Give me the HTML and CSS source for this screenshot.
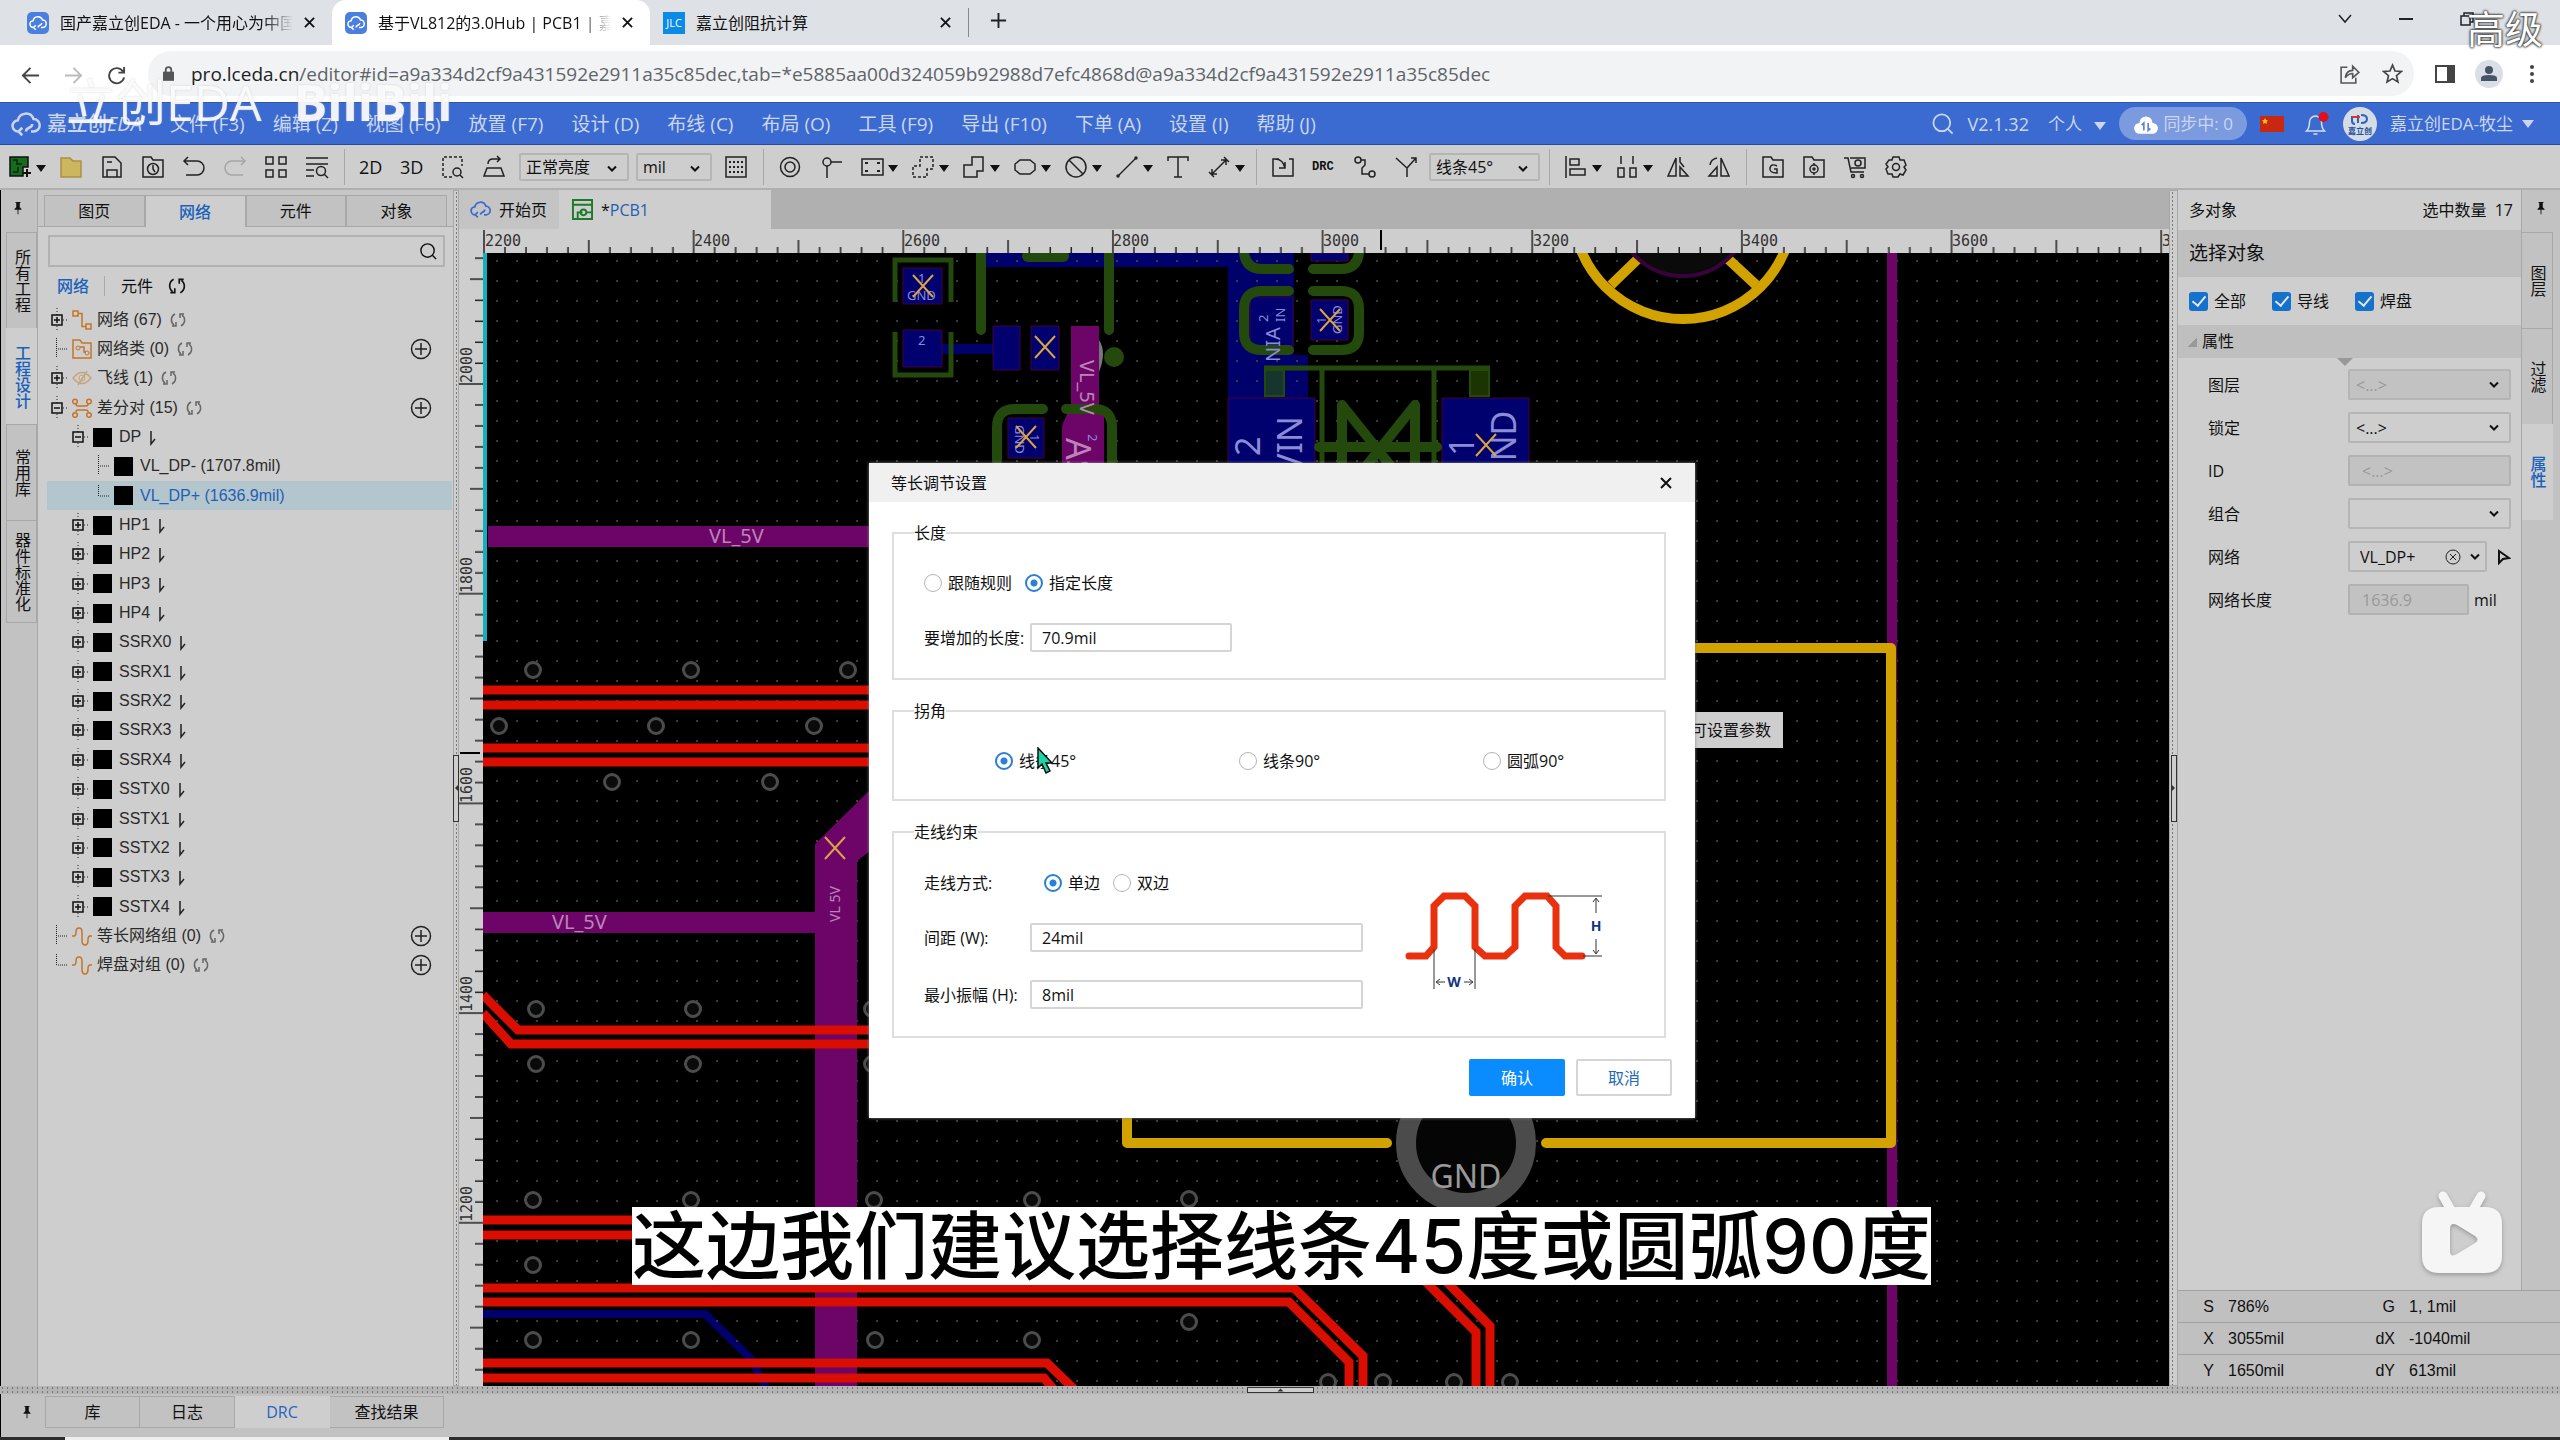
FILE: index.html
```html
<!DOCTYPE html>
<html lang="zh-CN">
<head>
  <meta charset="UTF-8">
  <title>基于VL812的3.0Hub | PCB1</title>
  <link rel="stylesheet" href="styles.css">
</head>
<body>
  <!-- Shared icons -->
  <svg class="sprite" xmlns="http://www.w3.org/2000/svg">
    <symbol id="cloud" viewBox="0 0 24 24"><path d="M7 18H6a4.500 4.500 0 0 1-.5-9A6.500 6.500 0 0 1 18 8a5 5 0 0 1 0 10h-2M9 21l-3-3 3-3M12 18c0-4 5-2 5-6" fill="none" stroke="currentColor" stroke-width="2"/></symbol>
    <symbol id="close" viewBox="0 0 12 12"><path d="M1 1l10 10M11 1L1 11" stroke="currentColor" stroke-width="2" fill="none"/></symbol>
    <symbol id="chev" viewBox="0 0 10 6"><path d="M1 1l4 4 4-4" stroke="currentColor" stroke-width="2" fill="none"/></symbol>
    <symbol id="pin" viewBox="0 0 10 16"><path d="M2 1h6v1H7v5l2 2v1H1V9l2-2V2H2zM4.500 10h1v5h-1z" fill="#111"/></symbol>
    <symbol id="search" viewBox="0 0 20 20"><circle cx="9" cy="9" r="7" fill="none" stroke="currentColor" stroke-width="1.500"/><path d="M14 14l4 4" stroke="currentColor" stroke-width="1.500"/></symbol>
    <symbol id="refresh" viewBox="0 0 18 18"><path d="M6 3a6.500 6.500 0 0 0-1 11M3 15h4v-4M12 15a6.500 6.500 0 0 0 1-11M15 3h-4v4" fill="none" stroke="currentColor" stroke-width="1.500"/></symbol>
    <symbol id="add" viewBox="0 0 22 22"><circle cx="11" cy="11" r="9.500" fill="none" stroke="#222" stroke-width="1.500"/><path d="M11 5v12M5 11h12" stroke="#222" stroke-width="1.500"/></symbol>
    <symbol id="plus" viewBox="0 0 20 28"><path d="M9 2v24M15 14h5" stroke="#222" stroke-dasharray="1 2"/><rect x="4" y="9" width="10" height="10" fill="#cecece" stroke="#111" stroke-width="1.500"/><path d="M6 14h6M9 11v6" stroke="#111" stroke-width="1.500"/></symbol>
    <symbol id="minus" viewBox="0 0 20 28"><path d="M9 2v24M15 14h5" stroke="#222" stroke-dasharray="1 2"/><rect x="4" y="9" width="10" height="10" fill="#cecece" stroke="#111" stroke-width="1.500"/><path d="M6 14h6" stroke="#111" stroke-width="1.500"/></symbol>
    <symbol id="mid" viewBox="0 0 20 28"><path d="M8.500 3v20M10 14h10" stroke="#222" stroke-dasharray="1 1"/></symbol>
    <symbol id="end" viewBox="0 0 20 28"><path d="M8.500 3v11M10 14h10" stroke="#222" stroke-dasharray="1 1"/></symbol>
    <symbol id="net" viewBox="0 0 20 20"><path d="M1 1h5v5H1zM14 14h5v5h-5zM6 3.500h4v13h4" fill="none" stroke="#c57428" stroke-width="1.500"/></symbol>
    <symbol id="netclass" viewBox="0 0 20 20"><path d="M1 1h7l2 3h9v15H1zM8 8h4v5h2" fill="none" stroke="#c57428" stroke-width="1.500"/><circle cx="6" cy="9" r="2" fill="none" stroke="#c57428"/><circle cx="15" cy="14" r="2" fill="none" stroke="#c57428"/></symbol>
    <symbol id="eye" viewBox="0 0 20 20"><path d="M1 10q9-11 18 0q-9 11-18 0zM15 3L6 17" fill="none" stroke="#c9a27a" stroke-width="1.500"/><circle cx="10" cy="10" r="3" fill="none" stroke="#c9a27a"/></symbol>
    <symbol id="diff" viewBox="0 0 20 20"><g fill="none" stroke="#c57428" stroke-width="1.500"><circle cx="3" cy="3.500" r="2.300"/><circle cx="17" cy="3.500" r="2.300"/><circle cx="3" cy="17" r="2.300"/><circle cx="17" cy="17" r="2.300"/><path d="M4 6q0 2 2 2h8q2 0 2-2M4 14q0-2 2-2h8q2 0 2 2"/></g></symbol>
    <symbol id="wave" viewBox="0 0 20 20"><path d="M0 10h2q2 0 2-4t3-4 3 4v8q0 5 3 5t3-5q0-4 2-4h2" fill="none" stroke="#c57428" stroke-width="1.500"/></symbol>
    <symbol id="down" viewBox="0 0 8 16"><path d="M2 1v13l4-5" fill="none" stroke="#222" stroke-width="1.500"/></symbol>
  </svg>

  <!-- Browser chrome -->
  <header class="tabstrip">
    <div class="tab"><span class="fav"><svg><use href="#cloud"/></svg></span><span class="tab-title">国产嘉立创EDA - 一个用心为中国</span><button class="x" aria-label="关闭"><svg><use href="#close"/></svg></button></div>
    <div class="tab current"><span class="fav"><svg><use href="#cloud"/></svg></span><span class="tab-title">基于VL812的3.0Hub | PCB1 | 嘉立</span><button class="x" aria-label="关闭"><svg><use href="#close"/></svg></button></div>
    <div class="tab"><span class="fav jlc">JLC</span><span class="tab-title">嘉立创阻抗计算</span><button class="x" aria-label="关闭"><svg><use href="#close"/></svg></button></div>
    <button class="newtab" aria-label="新标签页"><svg viewBox="0 0 18 18"><path d="M9 1v16M1 9h16" stroke="#222" stroke-width="2"/></svg></button>
    <div class="winctl">
      <svg viewBox="0 0 14 10"><path d="M1 1l6 7 6-7" fill="none" stroke="#222" stroke-width="1.500"/></svg>
      <svg viewBox="0 0 14 10"><path d="M0 5h14" stroke="#222" stroke-width="2"/></svg>
      <svg viewBox="0 0 14 14"><path d="M1 4h9v9H1zM4 4V1h9v9h-3" fill="none" stroke="#222" stroke-width="1.500"/></svg>
    </div>
  </header>
  <div class="address">
    <button class="nav" aria-label="后退"><svg viewBox="0 0 20 20"><path d="M19 10H2M10 2l-8 8 8 8" fill="none" stroke="#444" stroke-width="2"/></svg></button>
    <button class="nav" aria-label="前进"><svg viewBox="0 0 20 20"><path d="M1 10h17M10 2l8 8-8 8" fill="none" stroke="#bbb" stroke-width="2"/></svg></button>
    <button class="nav" aria-label="刷新"><svg viewBox="0 0 20 20"><path d="M17 6a8 8 0 1 0 1 6M18 1v6h-6" fill="none" stroke="#444" stroke-width="2"/></svg></button>
    <div class="url">
      <svg class="lock" viewBox="0 0 12 16"><path d="M0 6h12v10H0z" fill="#555"/><path d="M3 7V4a3 3 0 0 1 6 0v3" fill="none" stroke="#555" stroke-width="2"/></svg>
      <span><b>pro.lceda.cn</b>/editor#id=a9a334d2cf9a431592e2911a35c85dec,tab=*e5885aa00d324059b92988d7efc4868d@a9a334d2cf9a431592e2911a35c85dec</span>
      <svg class="share" viewBox="0 0 20 20"><path d="M8 4H2v15h14v-5M6 14q1-7 7-7V3l6 6-6 5v-4q-4 0-7 4z" fill="none" stroke="#555" stroke-width="1.500"/></svg>
      <svg class="star" viewBox="0 0 20 20"><path d="M10 2l2.400 5.600 6 .5-4.600 4 1.400 5.900L10 14.900 4.800 18l1.400-5.900-4.600-4 6-.5z" fill="none" stroke="#444" stroke-width="1.600"/></svg>
    </div>
    <svg class="side" viewBox="0 0 20 18"><path d="M1 1h18v16H1z" fill="none" stroke="#444" stroke-width="2"/><path d="M12 1h7v16h-7z" fill="#444"/></svg>
    <svg class="user" viewBox="0 0 30 30"><circle cx="15" cy="15" r="14" fill="#dadfe6"/><circle cx="15" cy="11" r="4" fill="#465468"/><path d="M7 22v-3q0-3 8-3t8 3v3z" fill="#465468"/></svg>
    <svg class="dots" viewBox="0 0 4 18"><circle cx="2" cy="2" r="2"/><circle cx="2" cy="9" r="2"/><circle cx="2" cy="16" r="2"/></svg>
  </div>

  <!-- Editor menu bar -->
  <nav class="menubar">
    <svg class="brand-icon"><use href="#cloud"/></svg>
    <strong class="brand">嘉立创<i>EDA</i></strong>
    <button>文件 (F3)</button><button>编辑 (Z)</button><button>视图 (F6)</button><button>放置 (F7)</button><button>设计 (D)</button><button>布线 (C)</button><button>布局 (O)</button><button>工具 (F9)</button><button>导出 (F10)</button><button>下单 (A)</button><button>设置 (I)</button><button>帮助 (J)</button>
    <div class="account">
      <svg class="msearch"><use href="#search"/></svg>
      <span class="ver">V2.1.32</span>
      <span class="who">个人 <i class="tri"></i></span>
      <span class="sync"><svg viewBox="0 0 24 20"><path d="M6 19a5 5 0 0 1 0-10 6 6 0 0 1 12 0 5 5 0 0 1 0 10z" fill="#fff"/><path d="M10 16V9l-2 2M14 9v7l2-2" stroke="#5c82d5" stroke-width="1.500" fill="none"/></svg>同步中: 0</span>
      <svg class="flag" viewBox="0 0 24 16"><path d="M0 0h24v16H0z" fill="#c8280f"/><path d="M5 2l1 2 2 .5L6.500 6 7 8 5 7 3 8l.5-2L2 4.500 4 4z" fill="#f0c020"/></svg>
      <svg class="bell" viewBox="0 0 26 24"><path d="M3 19q3-3 3-9a6 6 0 0 1 12 0q0 6 3 9zM10 22h4" fill="none" stroke="#d5def2" stroke-width="1.500"/><circle cx="20" cy="5" r="5" fill="#e0101c"/></svg>
      <svg class="avatar" viewBox="0 0 34 34"><circle cx="17" cy="17" r="17" fill="#d5dce4"/><path d="M9 9v5q0 3 3 3M15 8v8M18 8q6 0 6 4t-6 4" fill="none" stroke="#2a62c0" stroke-width="2"/><path d="M9 10h8" stroke="#d33" stroke-width="2"/><text x="17" y="27" text-anchor="middle" font-size="8" font-weight="700" fill="#234f9c">嘉立创</text></svg>
      <span>嘉立创EDA-牧尘</span>
      <i class="tri"></i>
    </div>
  </nav>

  <!-- Toolbar -->
  <div class="toolbar">
    <button class="tool drop"><svg viewBox="0 0 24 24"><path d="M2 2h18v10h-5v9H2z" fill="#176b1e" stroke="#111"/><path d="M5 5h4v4h5M5 17h5v-5" stroke="#0a2a0a" fill="none" stroke-width="1.500"/><path d="M19 14v8M15 18h8" stroke="#111" stroke-width="2"/></svg></button>
    <button class="tool"><svg viewBox="0 0 24 24"><path d="M2 3h9l3 3h8v16H2z" fill="#cdb65e" stroke="#a99244"/></svg></button>
    <button class="tool"><svg viewBox="0 0 24 24"><path d="M3 2h12l6 6v14H3zM7 22v-7h10v7M7 7h5"/></svg></button>
    <button class="tool"><svg viewBox="0 0 24 24"><path d="M2 2h8l2 3h10v17H2z"/><circle cx="12" cy="14" r="5.500"/><path d="M12 10v4l2 3"/></svg></button>
    <button class="tool"><svg viewBox="0 0 24 24"><path d="M6 2L2 6l4 4M2 6h13a6.500 6.500 0 0 1 0 14H4"/></svg></button>
    <button class="tool off"><svg viewBox="0 0 24 24"><path d="M18 2l4 4-4 4M22 6H9a6.500 6.500 0 0 0 0 14h11"/></svg></button>
    <button class="tool"><svg viewBox="0 0 24 24"><path d="M2 2h7v7H2zM15 2h7v7h-7zM2 15h7v7H2zM15 15h7v7h-7z"/></svg></button>
    <button class="tool"><svg viewBox="0 0 24 24"><path d="M1 3h22M1 9h22M1 15h8M1 21h8"/><circle cx="16" cy="16" r="4.500"/><path d="M19 19l4 4"/></svg></button>
    <span class="sep"></span>
    <button class="tool word">2D</button>
    <button class="tool word">3D</button>
    <button class="tool"><svg viewBox="0 0 24 24"><path d="M11 22H2V2h19v9" stroke-dasharray="3 2"/><circle cx="16" cy="17" r="4"/><path d="M19 20l3 3"/></svg></button>
    <button class="tool"><svg viewBox="0 0 24 24"><path d="M5 13h14l3 8H2zM6 9q0-5 5-5h7M15 1l3 3-3 3"/></svg></button>
    <label class="combo tbright"><select aria-label="亮度"><option>正常亮度</option></select><svg><use href="#chev"/></svg></label>
    <label class="combo tunit"><select aria-label="单位"><option>mil</option></select><svg><use href="#chev"/></svg></label>
    <button class="tool"><svg viewBox="0 0 24 24"><path d="M2 2h20v20H2z"/><path d="M5 7h14M5 12h14M5 17h14" stroke-dasharray="2 2" stroke-width="2"/></svg></button>
    <span class="sep"></span>
    <button class="tool"><svg viewBox="0 0 24 24"><circle cx="12" cy="12" r="9.500"/><circle cx="12" cy="12" r="5"/></svg></button>
    <button class="tool"><svg viewBox="0 0 24 24"><circle cx="8" cy="7" r="4"/><path d="M12 7h11M8 11v12"/></svg></button>
    <button class="tool drop"><svg viewBox="0 0 24 24"><path d="M2 4h21v16H2z"/><path d="M5 7h3v2H5zM17 7h3v2h-3zM5 15h3v2H5zM17 15h3v2h-3z" fill="#222" stroke="none"/></svg></button>
    <button class="tool drop"><svg viewBox="0 0 24 24"><path d="M9 2h13v12h-6v8H2V11h7z" stroke-dasharray="3 2"/></svg></button>
    <button class="tool drop"><svg viewBox="0 0 24 24"><path d="M10 2h11v14h-6v6H2V10h8z"/></svg></button>
    <button class="tool drop"><svg viewBox="0 0 24 24"><path d="M7 5h10l5 4v6l-5 4H7l-5-4V9z"/></svg></button>
    <button class="tool drop"><svg viewBox="0 0 24 24"><circle cx="12" cy="12" r="10"/><path d="M5 5l14 14"/></svg></button>
    <button class="tool drop"><svg viewBox="0 0 24 24"><path d="M3 21L21 3"/><circle cx="3" cy="21" r="1"/><circle cx="21" cy="3" r="1"/></svg></button>
    <button class="tool"><svg viewBox="0 0 24 24"><path d="M2 6V2h20v4M12 2v20M8 22h8"/></svg></button>
    <button class="tool drop"><svg viewBox="0 0 24 24"><path d="M5 19L19 5M19 10V5h-5M5 14v5h5M17 2l5 5M2 17l5 5"/></svg></button>
    <span class="sep"></span>
    <button class="tool"><svg viewBox="0 0 24 24"><path d="M8 4H2v17h20V4h-4M4 4q8 0 10 9M14 7v6H8"/></svg></button>
    <button class="tool word small">DRC</button>
    <button class="tool"><svg viewBox="0 0 24 24"><circle cx="5" cy="5" r="3"/><circle cx="19" cy="19" r="3"/><path d="M8 5h4v5l-3 3v6h7"/></svg></button>
    <button class="tool"><svg viewBox="0 0 24 24"><path d="M2 3l11 10v9M13 13L22 3M17 3h5v5"/></svg></button>
    <label class="combo tcorner"><select aria-label="拐角"><option>线条45°</option></select><svg><use href="#chev"/></svg></label>
    <span class="sep wide"></span>
    <button class="tool drop"><svg viewBox="0 0 24 24"><path d="M2 1v22M6 4h9v6H6zM6 14h15v6H6z"/></svg></button>
    <button class="tool drop"><svg viewBox="0 0 24 24"><path d="M3 13h6v9H3zM15 13h6v9h-6zM6 9V1M18 9V1"/></svg></button>
    <button class="tool"><svg viewBox="0 0 24 24"><path d="M10 3v18H2zM14 12v9h8zM14 2v5l4 5"/></svg></button>
    <button class="tool"><svg viewBox="0 0 24 24"><path d="M10 12v9H2zM14 3v18h8zM3 10q1-6 7-7"/></svg></button>
    <span class="sep"></span>
    <button class="tool"><svg viewBox="0 0 24 24"><path d="M2 2h8l2 3h10v17H2z"/><path d="M16 11q-6-3-7 2t7 5v-4h-3"/></svg></button>
    <button class="tool"><svg viewBox="0 0 24 24"><path d="M2 2h8l2 3h10v17H2z"/><circle cx="12" cy="14" r="4"/><circle cx="12" cy="14" r="1"/><path d="M12 8v2M12 18v2"/></svg></button>
    <button class="tool"><svg viewBox="0 0 24 24"><path d="M1 3h4l3 14h13M7 3h15v10H8"/><circle cx="15" cy="8" r="3"/><circle cx="10" cy="21" r="1.500"/><circle cx="19" cy="21" r="1.500"/></svg></button>
    <button class="tool"><svg viewBox="0 0 24 24"><path d="M9 2h6l1 3 4 0 2 5-2 2 2 3-3 5-3-1-2 3H9l-1-3-4 0-2-5 2-2-2-3 3-4 3 0z"/><circle cx="12" cy="12" r="3.500"/></svg></button>
  </div>

  <main class="main">
    <div class="strip left">
      <svg class="pin"><use href="#pin"/></svg>
      <button class="vtab">所有工程</button>
      <button class="vtab on">工程设计</button>
      <button class="vtab">常用库</button>
      <button class="vtab long">器件标准化</button>
    </div>

    <aside class="panel">
      <div class="ptabs"><button>图页</button><button class="on">网络</button><button>元件</button><button>对象</button></div>
      <label class="find"><input type="search" aria-label="搜索网络"><svg><use href="#search"/></svg></label>
      <div class="sub"><b>网络</b><span>元件</span><svg><use href="#refresh"/></svg></div>
      <ul class="tree">
        <li><svg class="ex"><use href="#plus"/></svg><svg class="ic"><use href="#net"/></svg>网络 (67)<svg class="re"><use href="#refresh"/></svg></li>
        <li><svg class="ex"><use href="#mid"/></svg><svg class="ic"><use href="#netclass"/></svg>网络类 (0)<svg class="re"><use href="#refresh"/></svg><button aria-label="新增"><svg><use href="#add"/></svg></button></li>
        <li><svg class="ex"><use href="#plus"/></svg><svg class="ic"><use href="#eye"/></svg>飞线 (1)<svg class="re"><use href="#refresh"/></svg></li>
        <li><svg class="ex"><use href="#minus"/></svg><svg class="ic"><use href="#diff"/></svg>差分对 (15)<svg class="re"><use href="#refresh"/></svg><button aria-label="新增"><svg><use href="#add"/></svg></button></li>
        <li class="l1"><svg class="ex"><use href="#minus"/></svg><i class="sq"></i>DP<svg class="dn"><use href="#down"/></svg></li>
        <li class="l2"><svg class="ex"><use href="#mid"/></svg><i class="sq"></i>VL_DP- (1707.8mil)</li>
        <li class="l2 sel"><svg class="ex"><use href="#end"/></svg><i class="sq"></i>VL_DP+ (1636.9mil)</li>
        <li class="l1"><svg class="ex"><use href="#plus"/></svg><i class="sq"></i>HP1<svg class="dn"><use href="#down"/></svg></li>
        <li class="l1"><svg class="ex"><use href="#plus"/></svg><i class="sq"></i>HP2<svg class="dn"><use href="#down"/></svg></li>
        <li class="l1"><svg class="ex"><use href="#plus"/></svg><i class="sq"></i>HP3<svg class="dn"><use href="#down"/></svg></li>
        <li class="l1"><svg class="ex"><use href="#plus"/></svg><i class="sq"></i>HP4<svg class="dn"><use href="#down"/></svg></li>
        <li class="l1"><svg class="ex"><use href="#plus"/></svg><i class="sq"></i>SSRX0<svg class="dn"><use href="#down"/></svg></li>
        <li class="l1"><svg class="ex"><use href="#plus"/></svg><i class="sq"></i>SSRX1<svg class="dn"><use href="#down"/></svg></li>
        <li class="l1"><svg class="ex"><use href="#plus"/></svg><i class="sq"></i>SSRX2<svg class="dn"><use href="#down"/></svg></li>
        <li class="l1"><svg class="ex"><use href="#plus"/></svg><i class="sq"></i>SSRX3<svg class="dn"><use href="#down"/></svg></li>
        <li class="l1"><svg class="ex"><use href="#plus"/></svg><i class="sq"></i>SSRX4<svg class="dn"><use href="#down"/></svg></li>
        <li class="l1"><svg class="ex"><use href="#plus"/></svg><i class="sq"></i>SSTX0<svg class="dn"><use href="#down"/></svg></li>
        <li class="l1"><svg class="ex"><use href="#plus"/></svg><i class="sq"></i>SSTX1<svg class="dn"><use href="#down"/></svg></li>
        <li class="l1"><svg class="ex"><use href="#plus"/></svg><i class="sq"></i>SSTX2<svg class="dn"><use href="#down"/></svg></li>
        <li class="l1"><svg class="ex"><use href="#plus"/></svg><i class="sq"></i>SSTX3<svg class="dn"><use href="#down"/></svg></li>
        <li class="l1"><svg class="ex"><use href="#plus"/></svg><i class="sq"></i>SSTX4<svg class="dn"><use href="#down"/></svg></li>
        <li><svg class="ex"><use href="#mid"/></svg><svg class="ic"><use href="#wave"/></svg>等长网络组 (0)<svg class="re"><use href="#refresh"/></svg><button aria-label="新增"><svg><use href="#add"/></svg></button></li>
        <li><svg class="ex"><use href="#end"/></svg><svg class="ic"><use href="#wave"/></svg>焊盘对组 (0)<svg class="re"><use href="#refresh"/></svg><button aria-label="新增"><svg><use href="#add"/></svg></button></li>
      </ul>
    </aside>
    <div class="split v"><span></span></div>

    <section class="center">
      <div class="doctabs">
        <button><svg class="home"><use href="#cloud"/></svg>开始页</button>
        <button class="on"><svg viewBox="0 0 22 22"><path d="M1 1h20v20H1zM1 6h20M6 21v-7h5M15 14h6" fill="none" stroke="#1d7a2c" stroke-width="2"/><circle cx="12" cy="14" r="3" fill="none" stroke="#1d7a2c" stroke-width="2"/></svg><span>*</span>PCB1</button>
      </div>
      <!-- Board view: rulers on the top and left, board in screen units -->
      <svg class="board" xmlns="http://www.w3.org/2000/svg" viewBox="459 229 1710 1157" preserveAspectRatio="xMinYMin slice">
        <defs>
          <pattern id="dotgrid" x="496" y="260" width="20" height="20" patternUnits="userSpaceOnUse"><rect width="2" height="2" fill="#3c3c3c"/></pattern>
          <pattern id="rx" x="483" y="229" width="209.650" height="24" patternUnits="userSpaceOnUse">
            <path d="M1 1v23M105.800 11v13M22 18v6M43 18v6M64 18v6M85 18v6M127 18v6M148 18v6M169 18v6M190 18v6" stroke="#222" stroke-width="1.500"/>
          </pattern>
          <pattern id="ry" x="459" y="383" width="24" height="209.700" patternUnits="userSpaceOnUse">
            <path d="M0 1h24M11 105.800h13M16 22h8M16 43h8M16 64h8M16 85h8M16 127h8M16 148h8M16 169h8M16 190h8" stroke="#222" stroke-width="1.500"/>
          </pattern>
          <g id="xm"><path d="M-10-11L10 11M10-11L-10 11" stroke="#d9a441" stroke-width="2"/></g>
          <ellipse id="via" rx="7.500" ry="7.500" fill="#0a0a0a" stroke="#4c4c4c" stroke-width="3"/>
        </defs>
        <rect x="459" y="229" width="1710" height="1157" fill="#cecece"/>
        <rect x="483" y="229" width="1686" height="24" fill="url(#rx)"/>
        <rect x="459" y="253" width="24" height="1133" fill="url(#ry)"/>
        <path d="M1381 230v20M460 753h20" stroke="#000" stroke-width="2"/>
        <g class="rtext">
          <text x="485" y="246">2200</text><text x="694" y="246">2400</text><text x="904" y="246">2600</text><text x="1113" y="246">2800</text><text x="1323" y="246">3000</text><text x="1533" y="246">3200</text><text x="1742" y="246">3400</text><text x="1952" y="246">3600</text><text x="2162" y="246">3800</text>
          <text transform="translate(472 383) rotate(-90)">2000</text><text transform="translate(472 593) rotate(-90)">1800</text><text transform="translate(472 803) rotate(-90)">1600</text><text transform="translate(472 1012) rotate(-90)">1400</text><text transform="translate(472 1222) rotate(-90)">1200</text>
        </g>

        <svg x="483" y="253" width="1686" height="1133" viewBox="483 253 1686 1133">
          <rect x="483" y="253" width="1686" height="1133" fill="#000"/>
          <!-- Blue pour and traces -->
          <path d="M986 253h308v102h14v45h-80V267H986z" fill="#00006c"/>
          <path d="M942 349h52" stroke="#00006c" stroke-width="10"/>
          <path d="M483 1314h222l47 46 14 28" fill="none" stroke="#00006c" stroke-width="8"/>
          <rect x="483" y="253" width="1686" height="1133" fill="url(#dotgrid)"/>
          <!-- Bottom layer power -->
          <g fill="#6d0569">
            <path d="M488 526h390v21H488zM483 912h340v21H483zM815 1400V844l60-59v62l-18 14v539zM1887 253h10v1133h-10z"/>
            <path d="M1071 326h28v78l5 12v50h-42v-40l9-22z"/>
          </g>
          <path d="M1099 340q8 12 0 32z" fill="#777"/>
          <path d="M485 253v388" stroke="#15aebe" stroke-width="4"/>
          <!-- Pads -->
          <g fill="#00006e" stroke="#43003f">
            <path d="M903 268h39v36h-39zM903 330h39v37h-39zM993 326h27v44h-27zM1031 326h28v44h-28zM1008 418h36v40h-36zM1250 297h43v49h-43zM1311 300h37v40h-37zM1311 253h37v8h-37zM1228 398h87v70h-87zM1442 398h87v70h-87z"/>
          </g>
          <!-- Silkscreen -->
          <g fill="none" stroke="#24490c">
            <path d="M895 302v-42h56v42M895 332v43h56v-43" stroke-width="5"/>
            <path d="M981 253v77M1109 253v77" stroke-width="10" stroke-linecap="round"/>
            <path d="M1028 256h35" stroke-width="12" stroke-linecap="round"/>
            <path d="M1043 409h-28q-18 0-18 18v34M1066 409h28q18 0 18 18v34" stroke-width="10" stroke-linecap="round"/>
            <path d="M1244 253q2 16 18 16h27M1359 253q-2 16-18 16h-28M1289 291h-27q-18 0-18 18v24q0 17 18 17h27M1313 291h28q18 0 18 18v24q0 17-18 17h-28" stroke-width="10" stroke-linecap="round"/>
            <path d="M1264 368h226M1322 368v98M1434 368v98" stroke-width="5"/>
            <path d="M1342 405v60M1415 405v60M1342 405l56 70M1415 405l-56 70M1319 447h118" stroke-width="10" stroke-linecap="round"/>
            <path d="M1265 370h19v26h-19z" fill="#16352c" stroke-width="2"/><path d="M1470 370h19v26h-19z" fill="#1b3402" stroke-width="2"/>
          </g>
          <circle cx="1114" cy="357" r="10" fill="#24490c"/>
          <!-- Pad and net names -->
          <g class="net">
            <text x="709" y="543">VL_5V</text><text x="552" y="929">VL_5V</text>
            <text class="n13" transform="translate(840 922) rotate(-90)">VL 5V</text>
            <text transform="translate(1080 360) rotate(90)">VL_5V</text>
            <text class="n34" transform="translate(1066 438) rotate(90)">AS</text>
          </g>
          <g class="pad">
            <text x="918" y="283">1</text><text x="907" y="300">GND</text><text x="918" y="345">2</text>
            <text transform="translate(1015 425) rotate(90)">GND</text><text transform="translate(1030 434) rotate(90)">1</text><text transform="translate(1088 434) rotate(90)">2</text>
            <text transform="translate(1268 322) rotate(-90)">2</text><text transform="translate(1285 322) rotate(-90)">IN</text><text class="n20" transform="translate(1280 362) rotate(-90)">NIA</text>
            <text transform="translate(1326 324) rotate(-90)">1</text><text transform="translate(1342 334) rotate(-90)">GND</text>
            <text class="n34" transform="translate(1260 456) rotate(-90)">2</text><text class="n34" transform="translate(1302 474) rotate(-90)">VIN</text>
            <text class="n34" transform="translate(1474 456) rotate(-90)">1</text><text class="n34" transform="translate(1516 486) rotate(-90)">GND</text>
          </g>
          <use href="#xm" x="923" y="286"/><use href="#xm" x="1045" y="347"/><use href="#xm" x="1026" y="437"/><use href="#xm" x="1330" y="320"/><use href="#xm" x="1486" y="445"/><use href="#xm" x="835" y="848"/>
          <!-- Signal pairs -->
          <g fill="none" stroke="#d90d00" stroke-width="9">
            <path d="M483 690h400M483 705h400M483 748h400M483 762h400"/>
            <path d="M483 995l35 35h370M483 1013l28 31h377"/>
            <path d="M483 1220h903l104 106v74M483 1235h896l97 97v68"/>
            <path d="M483 1288h811l69 68v34M483 1302h806l60 60v30M483 1363h564l28 27M483 1378h561l12 14"/>
          </g>
          <!-- Outline -->
          <g fill="none" stroke="#d1a200" stroke-width="10" stroke-linecap="round" stroke-linejoin="round">
            <path d="M1690 648h201v495h-345M1127 1100v43h260"/>
            <circle cx="1683" cy="209" r="110"/>
            <path d="M1640 257l-29 28M1726 257l30 28" stroke-linecap="butt"/>
          </g>
          <circle cx="1683" cy="209" r="67" fill="#0a0a0a" stroke="#36043b" stroke-width="4"/>
          <circle cx="1466" cy="1143" r="60" fill="#050505" stroke="#4b4b4b" stroke-width="20"/>
          <text class="gnd" x="1466" y="1188">GND</text>
          <g>
            <use href="#via" x="533" y="670"/><use href="#via" x="691" y="670"/><use href="#via" x="848" y="670"/>
            <use href="#via" x="499" y="726"/><use href="#via" x="656" y="726"/><use href="#via" x="814" y="726"/>
            <use href="#via" x="612" y="782"/><use href="#via" x="770" y="782"/>
            <use href="#via" x="536" y="1009"/><use href="#via" x="693" y="1009"/><use href="#via" x="872" y="1009"/>
            <use href="#via" x="536" y="1064"/><use href="#via" x="693" y="1064"/><use href="#via" x="872" y="1064"/>
            <use href="#via" x="533" y="1200"/><use href="#via" x="691" y="1200"/><use href="#via" x="874" y="1200"/><use href="#via" x="1032" y="1200"/><use href="#via" x="1189" y="1199"/>
            <use href="#via" x="533" y="1265"/><use href="#via" x="1189" y="1322"/>
            <use href="#via" x="533" y="1340"/><use href="#via" x="691" y="1340"/><use href="#via" x="875" y="1340"/><use href="#via" x="1032" y="1340"/>
            <use href="#via" x="1328" y="1382"/><use href="#via" x="1383" y="1382"/><use href="#via" x="1454" y="1382"/><use href="#via" x="1510" y="1382"/>
          </g>
        </svg>
      </svg>
    </section>

    <div class="split v right"><span></span></div>
    <div class="rightcol">
      <div class="rtop">
        <aside class="props">
          <div class="phead"><span>多对象</span><span>选中数量&nbsp; 17</span></div>
          <h2>选择对象</h2>
          <div class="checks">
            <label><input type="checkbox" checked>全部</label><label><input type="checkbox" checked>导线</label><label><input type="checkbox" checked>焊盘</label>
          </div>
          <h3><i></i>属性</h3>
          <div class="notch"></div>
          <div class="form">
            <label for="layer">图层</label><span class="combo off"><select id="layer" disabled><option>&lt;...&gt;</option></select><svg><use href="#chev"/></svg></span>
            <label for="lock">锁定</label><span class="combo"><select id="lock"><option>&lt;...&gt;</option></select><svg><use href="#chev"/></svg></span>
            <label for="pid">ID</label><input id="pid" class="field" value="&lt;...&gt;" disabled>
            <label for="group">组合</label><span class="combo"><select id="group"><option></option></select><svg><use href="#chev"/></svg></span>
            <label for="netname">网络</label><span class="line"><span class="combo netbox"><select id="netname"><option>VL_DP+</option></select><svg class="clear" viewBox="0 0 16 16"><circle cx="8" cy="8" r="7"/><path d="M5 5l6 6M11 5l-6 6"/></svg><svg><use href="#chev"/></svg></span><svg class="pick" viewBox="0 0 14 16"><path d="M2 2l10 7-6 1-4 4z" fill="none" stroke="#111" stroke-width="2"/></svg></span>
            <label for="netlen">网络长度</label><span class="line"><input id="netlen" class="field len" value="1636.9" disabled><span class="unit">mil</span></span>
          </div>
        </aside>
        <div class="strip">
          <svg class="pin"><use href="#pin"/></svg>
          <button class="vtab">图层</button><button class="vtab">过滤</button><button class="vtab on">属性</button>
        </div>
      </div>
      <dl class="status">
        <dt>S</dt><dd>786%</dd><dt>G</dt><dd>1, 1mil</dd>
        <dt>X</dt><dd>3055mil</dd><dt>dX</dt><dd>-1040mil</dd>
        <dt>Y</dt><dd>1650mil</dd><dt>dY</dt><dd>613mil</dd>
      </dl>
    </div>
  </main>

  <div class="split h"><span></span></div>
  <footer class="bottom">
    <svg class="pin"><use href="#pin"/></svg>
    <button>库</button><button>日志</button><button class="on">DRC</button><button class="wide">查找结果</button>
  </footer>
  <div class="edge"><span></span></div>

  <div class="tip">可设置参数</div>

  <!-- Length tuning dialog -->
  <form class="dialog">
    <header><span>等长调节设置</span><button type="button" aria-label="关闭"><svg><use href="#close"/></svg></button></header>
    <div class="dbody">
      <fieldset>
        <legend>长度</legend>
        <div class="row"><label class="radio"><input type="radio" name="len">跟随规则</label><label class="radio"><input type="radio" name="len" checked>指定长度</label></div>
        <div class="row"><label class="cap" for="addlen">要增加的长度:</label><input class="short" id="addlen" value="70.9mil"></div>
      </fieldset>
      <fieldset>
        <legend>拐角</legend>
        <div class="thirds"><label class="radio"><input type="radio" name="corner" checked>线条45°</label><label class="radio"><input type="radio" name="corner">线条90°</label><label class="radio"><input type="radio" name="corner">圆弧90°</label></div>
      </fieldset>
      <fieldset class="rules">
        <legend>走线约束</legend>
        <div class="rows">
          <div class="row"><span class="cap mode">走线方式:</span><label class="radio"><input type="radio" name="side" checked>单边</label><label class="radio"><input type="radio" name="side">双边</label></div>
          <div class="row"><label class="cap" for="gapw">间距 (W):</label><input id="gapw" value="24mil"></div>
          <div class="row"><label class="cap" for="amph">最小振幅 (H):</label><input id="amph" value="8mil"></div>
        </div>
        <svg class="diagram" viewBox="1404 888 200 104">
          <path d="M1409 955h17l8-9v-41l10-10h21l10 10v41l10 9h20l10-9v-41l10-10h22l9 10v41l9 9h17" fill="none" stroke="#e8310f" stroke-width="7" stroke-linecap="round"/>
          <path d="M1548 895h54M1583 955h19M1434 948v40M1475 948v40M1596 898v14M1596 938v14M1437 981h8M1464 981h8" stroke="#333"/>
          <path d="M1593 901l3-4 3 4M1593 949l3 4 3-4M1440 978l-4 3 4 3M1469 978l4 3-4 3" fill="none" stroke="#333"/>
          <text x="1596" y="930">H</text><text x="1454" y="986">W</text>
        </svg>
      </fieldset>
      <div class="actions"><button type="button" class="ok">确认</button><button type="button">取消</button></div>
    </div>
  </form>

  <svg class="cursor" viewBox="0 0 18 28"><path d="M2 1v20l4-4 4 9 4-2-4-8h6z" fill="#1fd3a9" stroke="#111" stroke-width="1.500"/></svg>
  <div class="caption">这边我们建议选择线条45度或圆弧90度</div>
  <div class="mark"><span>立创EDA</span><b>BiliBili</b></div>
  <div class="level">高级</div>
  <svg class="tv" viewBox="0 0 90 90"><path d="M26 6l8 14M64 6l-8 14" stroke="#f5f5f5" stroke-width="9" stroke-linecap="round"/><path fill-rule="evenodd" d="M22 17h46q17 0 17 17v32q0 17-17 17H22Q5 83 5 66V34q0-17 17-17zM33 39v22q0 7 7 3l18-11q5-3 0-7L40 35q-7-3-7 4z" fill="#f5f5f5"/></svg>
</body>
</html>
```
FILE: styles.css
```css
* {
  box-sizing: border-box;
}
body {
  margin: 0;
  height: 100vh;
  display: flex;
  flex-direction: column;
  overflow: hidden;
  background: #cecece;
  color: #111;
  font: 16px/24px "Open Sans", "Noto Sans CJK SC", sans-serif;
}
button, input, select {
  font: inherit;
  color: inherit;
}
button {
  margin: 0;
  padding: 0;
  border: 0;
  background: none;
}
svg {
  flex: none;
}
.sprite {
  position: absolute;
  width: 0;
  height: 0;
}

/* Browser */
.tabstrip {
  display: flex;
  height: 45px;
  padding-left: 14px;
  background: #dee1e6;
}
.tab {
  display: flex;
  align-items: center;
  gap: 11px;
  width: 318px;
  padding: 0 17px 0 13px;
  border-radius: 14px 14px 0 0;
}
.tab.current {
  background: #fff;
}
.fav {
  display: flex;
  align-items: center;
  justify-content: center;
  width: 22px;
  height: 22px;
  border-radius: 5px;
  background: #4a7fe0;
  color: #fff;
}
.fav svg {
  width: 18px;
  height: 18px;
}
.jlc {
  border-radius: 0;
  background: #0a8be6;
  font-size: 11px;
}
.tab-title {
  flex: 1;
  overflow: hidden;
  white-space: nowrap;
}
.tab:not(:nth-child(3)) .tab-title {
  mask-image: linear-gradient(to left, transparent, #000 30px);
}
.x svg {
  display: block;
  width: 11px;
  height: 11px;
}
.newtab {
  width: 60px;
  margin: 8px 0;
  border-left: 1px solid #888;
}
.newtab svg {
  width: 17px;
  height: 17px;
}
.winctl {
  display: flex;
  align-items: center;
  gap: 47px;
  margin-left: auto;
  padding: 0 86px 8px 0;
}
.winctl svg {
  width: 14px;
  height: 14px;
}
.address {
  display: flex;
  align-items: center;
  height: 57px;
  padding-left: 9px;
  background: #fff;
}
.nav {
  width: 43px;
  height: 43px;
}
.nav svg {
  width: 19px;
  height: 19px;
  vertical-align: middle;
}
.url {
  display: flex;
  flex: 1;
  align-items: center;
  height: 45px;
  margin-left: 10px;
  padding: 0 11px 0 15px;
  border-radius: 23px;
  background: #f1f3f4;
  color: #60646a;
  font-size: 19px;
}
.url b {
  color: #222;
  font-weight: 400;
}
.url span {
  flex: 1;
  margin-left: 17px;
}
.lock {
  width: 11px;
  height: 15px;
}
.share, .star {
  width: 21px;
  height: 21px;
}
.star {
  margin-left: 22px;
}
.side {
  width: 20px;
  height: 18px;
  margin-left: 21px;
}
.user {
  width: 30px;
  height: 30px;
  margin-left: 19px;
}
.dots {
  width: 4px;
  height: 18px;
  margin: 0 26px;
  fill: #444;
}

/* Menu bar */
.menubar {
  display: flex;
  align-items: center;
  gap: 28px;
  height: 43px;
  padding: 0 26px 0 9px;
  border-top: 1px solid #3159ab;
  border-bottom: 1px solid #274b96;
  background: #3b6bd0;
  color: #cbd6ee;
  font-size: 19px;
  white-space: nowrap;
}
.brand-icon {
  width: 34px;
  height: 30px;
}
.brand {
  margin: 0 0 0 -24px;
  font-size: 20px;
  font-weight: 500;
}
.account {
  display: flex;
  align-items: center;
  gap: 13px;
  margin-left: auto;
  font-size: 17px;
}
.msearch {
  width: 24px;
  height: 24px;
}
.ver {
  font-size: 18px;
}
.tri {
  display: inline-block;
  margin-left: 8px;
  border: 6px solid transparent;
  border-top: 8px solid #cbd6ee;
  border-bottom: 0;
}
.account > .tri {
  margin-left: -4px;
}
.who {
  margin-left: 6px;
}
.sync {
  display: flex;
  align-items: center;
  gap: 4px;
  height: 33px;
  padding: 0 14px;
  border-radius: 17px;
  background: #7c9ade;
}
.sync svg {
  width: 26px;
  height: 22px;
}
.flag {
  width: 24px;
  height: 16px;
}
.bell {
  width: 27px;
  height: 24px;
  margin-left: 6px;
}
.avatar {
  width: 34px;
  height: 34px;
}

/* Toolbar */
.toolbar {
  display: flex;
  align-items: center;
  height: 45px;
  border-bottom: 2px solid #b0b0b0;
}
.tool {
  width: 41px;
  height: 40px;
  padding-left: 8px;
  text-align: left;
}
.tool svg {
  display: block;
  width: 24px;
  height: 24px;
  fill: none;
  stroke: #222;
  stroke-width: 1.500;
}
.tool.off svg {
  stroke: #a5a5a5;
}
.tool.drop {
  display: flex;
  align-items: center;
  gap: 4px;
  width: 51px;
}
.tool.drop::after {
  content: "";
  margin-top: 4px;
  border: 5px solid transparent;
  border-top: 7px solid #111;
  border-bottom: 0;
}
.word {
  font-size: 18px;
}
.word.small {
  font: 700 12px "Liberation Mono", monospace;
}
.sep {
  width: 1px;
  height: 36px;
  margin: 0 6px;
  background: #a8a8a8;
}
.sep.wide {
  margin-left: 9px;
}
.combo {
  position: relative;
  display: flex;
  height: 31px;
}
.combo select {
  width: 100%;
  padding: 0 8px;
  border: 2px solid #b5b5b5;
  border-radius: 2px;
  background: #cecece;
  appearance: none;
  opacity: 1;
}
.combo > svg {
  position: absolute;
  top: 12px;
  right: 12px;
  width: 10px;
  height: 7px;
  pointer-events: none;
}
.toolbar .combo {
  height: 28px;
}
.toolbar .combo select {
  padding: 0 5px;
}
.tbright {
  width: 110px;
  margin: 0 7px 0 4px;
}
.tunit {
  width: 76px;
  margin-right: 4px;
}
.tcorner {
  width: 111px;
  margin-left: 2px;
}

/* Main area */
.main {
  display: flex;
  flex: 1;
  min-height: 0;
}
.strip {
  display: flex;
  flex-direction: column;
  width: 38px;
  background: #c2c2c2;
}
.strip.left {
  align-items: flex-end;
  border-left: 1px solid #000;
  border-right: 1px solid #a8a8a8;
}
.pin {
  width: 10px;
  height: 14px;
}
.strip .pin {
  margin: 11px 14px 17px;
}
.vtab {
  width: 31px;
  height: 96px;
  border: 1px solid #a8a8a8;
  border-bottom: 0;
  line-height: 29px;
  writing-mode: vertical-rl;
  text-align: center;
}
.vtab:last-child {
  border-bottom: 1px solid #a8a8a8;
}
.vtab.long {
  height: 103px;
}
.vtab.on {
  background: #cecece;
  color: #1862bd;
  border-color: #cecece;
  font-weight: 500;
}
.panel {
  display: flex;
  flex-direction: column;
  width: 415px;
}
.ptabs {
  display: flex;
  padding: 5px 6px 0;
  border-bottom: 1px solid #a8a8a8;
  background: #c6c6c6;
}
.ptabs button {
  flex: 1;
  height: 31px;
  border: 1px solid #a8a8a8;
  border-bottom: 0;
  background: #c2c2c2;
}
.ptabs button.on {
  height: 32px;
  margin-bottom: -1px;
  background: #cecece;
  color: #1862bd;
  font-weight: 500;
}
.find {
  position: relative;
  margin: 8px 8px 0 10px;
}
.find input {
  display: block;
  width: 100%;
  height: 32px;
  border: 2px solid #b2b2b2;
  background: #cecece;
}
.find svg {
  position: absolute;
  top: 7px;
  right: 7px;
  width: 19px;
  height: 19px;
}
.sub {
  display: flex;
  align-items: center;
  height: 38px;
  padding-left: 19px;
}
.sub b {
  color: #1862bd;
  font-weight: 500;
}
.sub span {
  margin-left: 15px;
  padding: 0 14px 0 16px;
  border-left: 1px solid #aaa;
  line-height: 20px;
}
.sub svg {
  width: 20px;
  height: 20px;
}
.tree {
  display: flex;
  flex-direction: column;
  height: 675px;
  margin: 0;
  padding: 0 1px 0 9px;
  list-style: none;
  color: #2a2a2a;
  font-family: "Liberation Sans", "Noto Sans CJK SC", sans-serif;
}
.tree li {
  display: flex;
  flex: 1;
  align-items: center;
  min-height: 0;
  padding-left: 1px;
}
.tree .l1 {
  padding-left: 22px;
}
.tree .l2 {
  padding-left: 43px;
}
.tree .sel {
  background: #b3c5cd;
  color: #1f5fb4;
}
.ex {
  width: 20px;
  height: 28px;
}
.ic {
  width: 20px;
  height: 20px;
  margin: 0 5px 0 4px;
}
.sq {
  width: 19px;
  height: 19px;
  margin: 0 7px 0 4px;
  background: #000;
}
.re {
  width: 18px;
  height: 18px;
  margin-left: 7px;
  color: #666;
}
.dn {
  width: 8px;
  height: 16px;
  margin: 2px 0 0 8px;
}
.tree button {
  margin: 0 20px 0 auto;
}
.tree button svg {
  display: block;
  width: 22px;
  height: 22px;
}
.split {
  display: flex;
  align-items: center;
  justify-content: center;
  background: #b4b4b4 radial-gradient(#777 1px, transparent 1px) 0 0 / 5px 4px;
}
.split span {
  display: flex;
  flex: none;
  align-items: center;
  justify-content: center;
  border: 1px solid #333;
  background: #cecece;
}
.split span::after {
  content: "";
  border: 3px solid transparent;
  border-right-color: #333;
  border-left: 0;
}
.split.right span::after {
  transform: rotate(180deg);
}
.split.h span::after {
  transform: rotate(90deg);
}
.split.v {
  width: 6px;
  border: 1px solid #a8a8a8;
  background-color: #cecece;
}
.split.v span {
  width: 6px;
  height: 67px;
}
.split.right {
  width: 9px;
}
.split.h {
  height: 8px;
}
.split.h span {
  width: 67px;
  height: 6px;
}
.center {
  display: flex;
  flex: 1;
  flex-direction: column;
  min-width: 0;
}
.doctabs {
  display: flex;
  height: 39px;
  background: #b0b0b0;
}
.doctabs button {
  display: flex;
  align-items: center;
  width: 100px;
  padding-left: 11px;
  background: #c4c4c4;
}
.doctabs button.on {
  width: 212px;
  padding-left: 13px;
  background: #cecece;
  color: #1f5fb4;
}
.doctabs span {
  color: #111;
}
.doctabs svg {
  width: 21px;
  height: 21px;
  margin-right: 8px;
}
.doctabs .home {
  color: #3b6bd0;
}
.board {
  flex: 1;
  width: 100%;
  min-height: 0;
}
.rtext {
  font: 15px "DejaVu Sans Mono", monospace;
  fill: #333;
}
.net {
  font: 20px "Noto Sans", sans-serif;
  fill: #b985b8;
}
.pad {
  font: 13px "Noto Sans", sans-serif;
  fill: #8b8bd6;
}
.net .n13 {
  font-size: 14px;
}
.pad .n20 {
  font-size: 20px;
}
.pad .n34, .net .n34 {
  font-size: 34px;
}
.gnd {
  font: 32px "Noto Sans", sans-serif;
  fill: #999;
  text-anchor: middle;
}

/* Properties */
.rightcol {
  display: flex;
  flex-direction: column;
  width: 382px;
}
.rtop {
  display: flex;
  flex: 1;
  min-height: 0;
}
.props {
  flex: 1;
  border-right: 1px solid #a8a8a8;
}
.phead {
  display: flex;
  justify-content: space-between;
  padding: 8px 8px 8px 11px;
}
.props h2, .props h3 {
  margin: 0;
  background: #bfbfbf;
  font-weight: 400;
}
.props h2 {
  padding-left: 11px;
  font-size: 19px;
  line-height: 47px;
}
.props h3 {
  display: flex;
  align-items: center;
  gap: 5px;
  padding-left: 9px;
  font-size: 16px;
  line-height: 33px;
}
.props h3 i {
  width: 10px;
  height: 10px;
  background: linear-gradient(135deg, transparent 50%, #999 50%);
}
.notch {
  width: 0;
  margin-left: 159px;
  border: 8px solid transparent;
  border-top-color: #999;
  border-bottom: 0;
}
.checks {
  display: flex;
  gap: 26px;
  padding: 12px 11px 12px;
}
.checks label {
  display: flex;
  align-items: center;
  gap: 6px;
}
.checks input {
  width: 19px;
  height: 19px;
  margin: 0;
  border-radius: 3px;
  background: #1471cc;
  appearance: none;
}
.checks input::after {
  content: "";
  display: block;
  width: 6px;
  height: 11px;
  margin: 1px 0 0 6px;
  border: solid #e5e5e5;
  border-width: 0 2px 2px 0;
  transform: rotate(40deg);
}
.form {
  display: grid;
  grid-template-columns: 140px 163px;
  grid-auto-rows: 31px;
  align-items: center;
  row-gap: 12px;
  padding: 3px 0 0 30px;
}
.form select, .field {
  padding: 0 6px;
}
.field {
  width: 163px;
  height: 31px;
  padding: 0 12px;
  border: 2px solid #b2b2b2;
  border-radius: 2px;
}
.form :disabled {
  background: #c2c2c2;
  color: #999;
}
.line {
  display: flex;
  align-items: center;
}
.netbox {
  width: 141px;
}
.netbox select {
  padding: 0 10px;
}
.combo > .clear {
  top: 8px;
  right: 26px;
  width: 16px;
  height: 16px;
  fill: none;
  stroke: #222;
}
.netbox > svg {
  right: 7px;
}
.pick {
  width: 14px;
  height: 16px;
  margin-left: 10px;
}
.len {
  width: 121px;
}
.unit {
  margin-left: 5px;
}
.rtop .strip .vtab {
  border-left: 0;
}
.status {
  display: grid;
  grid-template-columns: 36px 145px 36px 1fr;
  margin: 0;
  background: #c0c0c0;
  font: 16px/31px "Liberation Sans", sans-serif;
}
.status dt, .status dd {
  margin: 0;
  border-top: 1px solid #a0a0a0;
}
.status dt {
  text-align: right;
}
.status dd {
  padding-left: 14px;
}

/* Bottom bar */
.bottom {
  display: flex;
  height: 43px;
  padding: 2px 0 9px 21px;
  border-left: 1px solid #000;
  background: #c2c2c2;
}
.bottom .pin {
  margin: 9px 13px 0 0;
}
.bottom button {
  width: 95px;
  border: 1px solid #a8a8a8;
  border-left-width: 0;
}
.bottom button:nth-of-type(1) {
  border-left-width: 1px;
}
.bottom .on {
  border-color: #cecece;
  background: #cecece;
  color: #1f66c0;
}
.bottom .wide {
  width: 114px;
}
.edge {
  height: 3px;
  padding-left: 65px;
  background: #2c2c2c;
}
.edge span {
  display: block;
  width: 384px;
  height: 3px;
  background: #eee;
}

/* Floating layers */
.tip {
  position: absolute;
  left: 1679px;
  top: 712px;
  padding: 6px 12px;
  background: #cecece;
}
.dialog {
  position: absolute;
  left: 869px;
  top: 463px;
  width: 826px;
  background: #fff;
  box-shadow: 0 0 3px #888;
}
.dialog > header {
  display: flex;
  align-items: center;
  justify-content: space-between;
  height: 39px;
  padding: 0 23px 0 22px;
  background: #f0f0f0;
}
.dialog > header svg {
  display: block;
  width: 12px;
  height: 12px;
}
.dbody {
  padding: 19px 23px 22px;
}
.dialog fieldset {
  min-width: 0;
  margin: 0 6px 19px 0;
  padding: 26px 30px;
  border: 2px solid #dedede;
}
.dialog legend {
  margin-left: -10px;
  padding: 0;
  line-height: 24px;
}
.row {
  display: flex;
  align-items: center;
  gap: 13px;
}
.row + .row {
  margin-top: 28px;
}
.radio {
  display: flex;
  align-items: center;
  gap: 6px;
}
.radio input {
  width: 18px;
  height: 18px;
  margin: 0;
  border: 1px solid #b5b5b5;
  border-radius: 50%;
  appearance: none;
}
.radio input:checked {
  border: 2px solid #2b7fd6;
  background: radial-gradient(#2b7fd6 3px, transparent 4px);
}
.cap {
  width: 106px;
  margin-right: -13px;
  white-space: nowrap;
}
.mode {
  margin-right: 1px;
}
.row > input {
  width: 333px;
  height: 29px;
  padding: 0 10px;
  border: 2px solid #d5d5d5;
  border-radius: 2px;
}
.row > .short {
  width: 202px;
}
.thirds {
  display: grid;
  grid-template-columns: 244px 244px auto;
  padding-left: 71px;
}
.dialog .rules {
  display: flex;
  justify-content: space-between;
  padding: 27px 30px;
}
.diagram {
  width: 200px;
  height: 104px;
  margin: 18px 30px 0 0;
}
.diagram text {
  font: 700 14px "Open Sans", sans-serif;
  fill: #12357f;
  text-anchor: middle;
}
.actions {
  display: flex;
  justify-content: flex-end;
  gap: 11px;
  padding-top: 2px;
}
.actions button {
  width: 96px;
  height: 37px;
  border: 2px solid #d5d5d5;
  border-radius: 2px;
  color: #2668b2;
}
.actions .ok {
  border-color: #0a8cff;
  background: #0a8cff;
  color: #fff;
}
.cursor {
  position: absolute;
  left: 1036px;
  top: 747px;
  width: 18px;
  height: 28px;
}
.caption {
  position: absolute;
  left: 632px;
  top: 1207px;
  background: #fff;
  color: #000;
  font: 500 74px/78px Inter, "Noto Sans CJK SC", sans-serif;
  white-space: nowrap;
}
.mark {
  position: absolute;
  left: 66px;
  top: 72px;
  display: flex;
  gap: 32px;
  color: rgba(255, 255, 255, .88);
  font-size: 50px;
  line-height: 60px;
  text-shadow: 0 0 2px rgba(180, 180, 180, .6);
}
.level {
  position: absolute;
  right: 17px;
  top: 8px;
  color: #fff;
  font-size: 38px;
  line-height: 40px;
  text-shadow: 0 0 2px #333, 0 0 2px #333, 0 0 3px #333;
}
.tv {
  position: absolute;
  right: 53px;
  top: 1190px;
  width: 90px;
  height: 90px;
  filter: drop-shadow(0 2px 2px #999);
}
```
